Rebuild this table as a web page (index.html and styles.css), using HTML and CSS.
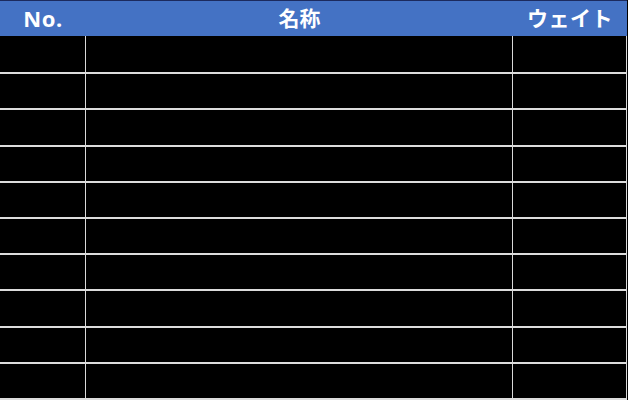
FILE: index.html
```html
<!DOCTYPE html>
<html lang="ja">
<head>
<meta charset="utf-8">
<link rel="stylesheet" href="styles.css">
</head>
<body>
<div class="sheet">
  <div class="head head-no">No.</div>
  <div class="head head-name">名称</div>
  <div class="head head-weight">ウェイト</div>

  <div class="cell"></div><div class="cell"></div><div class="cell"></div>
  <div class="cell"></div><div class="cell"></div><div class="cell"></div>
  <div class="cell"></div><div class="cell"></div><div class="cell"></div>
  <div class="cell"></div><div class="cell"></div><div class="cell"></div>
  <div class="cell"></div><div class="cell"></div><div class="cell"></div>
  <div class="cell"></div><div class="cell"></div><div class="cell"></div>
  <div class="cell"></div><div class="cell"></div><div class="cell"></div>
  <div class="cell"></div><div class="cell"></div><div class="cell"></div>
  <div class="cell"></div><div class="cell"></div><div class="cell"></div>
  <div class="cell"></div><div class="cell"></div><div class="cell"></div>
</div>
</body>
</html>
```
FILE: styles.css
```css
html, body {
  margin: 0;
  padding: 0;
  background: #000;
}
body {
  width: 628px;
  height: 400px;
  overflow: hidden;
}
.sheet {
  width: 627px;
  display: grid;
  grid-template-columns: 86px 427px 114px;
  grid-template-rows: 36px repeat(10, 36.2px);
  border-bottom: 2px solid #dcdcdc;
  font-family: "Noto Sans CJK JP", "Noto Sans", sans-serif;
}
.head {
  box-sizing: border-box;
  background: #4472c4;
  border-top: 1px solid #1c2a5e;
  color: #fff;
  font-weight: 700;
  font-size: 21px;
  line-height: 1;
  display: flex;
  align-items: center;
  justify-content: center;
  padding-bottom: 2px;
}
.head-no {
  font-family: "Noto Sans", sans-serif;
  font-size: 22px;
  letter-spacing: 0.6px;
}
.head-weight {
  letter-spacing: 0.5px;
}
.cell {
  box-sizing: border-box;
  background: #000;
  border-right: 1px solid #d9d9d9;
  border-top: 2px solid #dcdcdc;
}
.cell:nth-child(-n+6) {
  border-top: none;
}
```
